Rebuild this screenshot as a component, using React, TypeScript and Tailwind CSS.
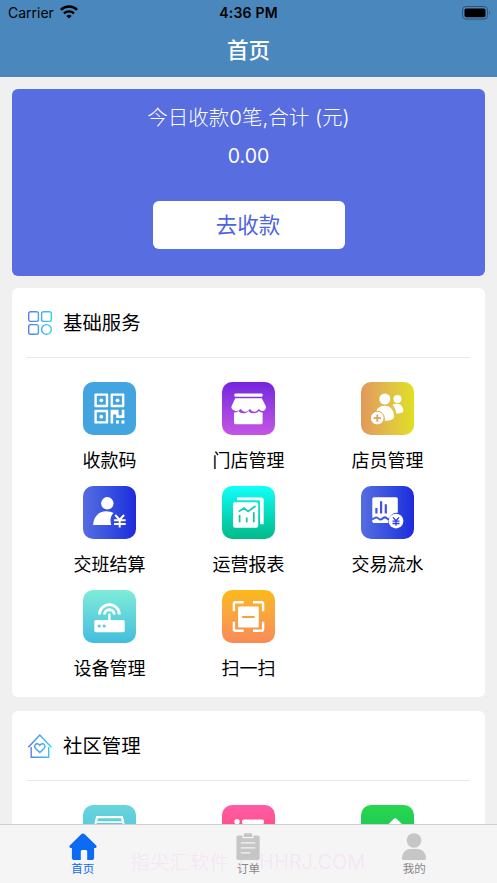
import React from 'react';

type Service = {
  label: string;
  tile: string;
  icon: React.ReactNode;
};

const QrIcon = () => (
  <svg viewBox="0 0 53 53" className="w-full h-full" fill="none">
    <g stroke="#fff" strokeWidth="2.4" strokeLinejoin="round">
      <rect x="12.6" y="12.6" width="11.4" height="11.4" />
      <rect x="28.8" y="12.6" width="11.4" height="11.4" />
      <rect x="12.6" y="29" width="11.4" height="11.4" />
    </g>
    <g fill="#fff">
      <circle cx="18.3" cy="18.3" r="1.9" />
      <circle cx="34.5" cy="18.3" r="1.9" />
      <circle cx="18.3" cy="34.7" r="1.9" />
      <path d="M27.6 27.8h8v5.4h3.2v-5.4h2.6v8.1h-8.2v-3.4h-3v9.1h-2.6z" />
      <rect x="33" y="38.4" width="2.9" height="3.2" />
      <rect x="38.5" y="38.4" width="2.9" height="3.2" />
    </g>
  </svg>
);

const StoreIcon = () => (
  <svg viewBox="0 0 53 53" className="w-full h-full" fill="#fff">
    <rect x="12.3" y="11.6" width="28.4" height="3.2" rx="1.4" />
    <path d="M13.2 16.2h26.6l4.2 8.3c.3 2.6-1.5 4.5-3.4 4.5-2 0-3.1-1-3.8-2.2-1.1 1.6-2.2 3-4.3 3-2.3 0-3.8-1.6-4.6-3-.8 1.4-2.3 3-4.6 3-2.1 0-3.6-1.4-4.5-3-.9 1.2-2 2.2-4 2.2-2.9 0-6.1-2-5.3-4.5z" />
    <path d="M12 30.4c2.2.3 3.5-.3 4.4-1.3 1.3 1.7 3.2 2.5 5.2 2.2 1.800 0 3.400-.8 4.800-2.400 1.500 1.600 3 2.400 5 2.400 2.200.1 4-.6 5.400-2.200 1.100 1.100 2.200 1.500 3.800 1.300v10c0 1-.7 1.800-1.800 1.800h-25c-1.100 0-1.800-.8-1.800-1.800z" />
  </svg>
);

const StaffIcon = () => (
  <svg viewBox="0 0 53 53" className="w-full h-full" fill="#fff">
    <circle cx="23.8" cy="17" r="5.5" />
    <circle cx="36.5" cy="17" r="4" />
    <path d="M31.600 22.900c1.400-.8 3.200-1.100 5-1.100 3.600 0 5.800 4 5.800 7.200 0 1.600-3.200 2.600-7.200 2.500-.3-3.500-1.600-6.500-3.600-8.600z" />
    <path d="M15.3 28.8c1.400-3.400 4.700-5 8.400-5 5.800 0 9.400 4.500 9.400 11 0 2.700-4.200 4-9.300 4-.1-4.900-3.300-9.300-8.500-10z" />
    <circle cx="16.3" cy="36.1" r="6.900" stroke="#e0a04e" strokeWidth="1" />
    <path d="M16.3 32.4v7.4M12.6 36.1H20" stroke="#dda351" strokeWidth="1.8" />
  </svg>
);

const ShiftIcon = () => (
  <svg viewBox="0 0 53 53" className="w-full h-full" fill="#fff">
    <circle cx="24.3" cy="17.3" r="6.2" />
    <path d="M10.1 38.9C10.6 30.4 16 25.2 23 25.2c3 0 5.6.7 7.5 1.9-3.1 3-3.6 7.7-2.2 11.8z" />
    <path d="M32.2 29l4.4 4.8 4.5-4.8M31 34.3h11.7M31 38h11.7M36.7 33.8v7.8" fill="none" stroke="#fff" strokeWidth="2" />
  </svg>
);

const ReportIcon = () => (
  <svg viewBox="0 0 53 53" className="w-full h-full">
    <path d="M15 14.2v-2.7h24.8c1 0 1.9.9 1.9 1.9v24.8H38V15.5c0-.8-.5-1.3-1.3-1.3z" fill="#fff" />
    <rect x="11" y="16.2" width="25.2" height="25.6" rx="2" fill="#fff" />
    <path d="M16.8 25.5l5.3-3.400 4 3.300 7.400-5.400" fill="none" stroke="#12cfb8" strokeWidth="1.7" />
    <path d="M17.6 29v7.200M24.7 31.500v4.700M31.8 26.2v10" stroke="#0ac5a2" strokeWidth="1.700" fill="none" />
  </svg>
);

const FlowIcon = () => (
  <svg viewBox="0 0 53 53" className="w-full h-full" fill="none">
    <path d="M11.3 13c0-1.1.7-1.8 1.8-1.8h22c1 0 1.7.7 1.7 1.8v13.700a9 9 0 0 0-8.800 5.600c-1.100.4-2.400-2-4-2-2.100 0-2.800 2.100-4.500 2.100s-2-2-4.200-2c-1.800 0-2.600 1.400-4 1.400z" fill="#fff" />
    <path d="M11.3 34.1c2 0 2.8-1.6 4-1.6 1.6 0 2.2 2 4.3 2s2.8-2 4.3-2 2 1.6 3.3 1.8c-.1 1 0 1.8.3 2.8H13c-1 0-1.7-.8-1.7-1.8z" fill="#fff" />
    <path d="M15.4 22v5.6M20.1 15.3v12.3M24.8 18.3v9.3" stroke="#4254dc" strokeWidth="2.2" />
    <circle cx="35" cy="35.1" r="7.4" fill="#fff" />
    <path d="M32 31.4l3 3.3 3-3.3M31.5 35.2h7M31.5 37.5h7M35 34.7v5" stroke="#2f3fdc" strokeWidth="1.3" />
  </svg>
);

const RouterIcon = () => (
  <svg viewBox="0 0 53 53" className="w-full h-full" fill="none">
    <path d="M16.400 24.600a10 10 0 1 1 20 0M21.500 24.600a4.900 4.900 0 1 1 9.800 0" stroke="#fff" strokeWidth="2.900" />
    <path d="M26.4 23.5v8" stroke="#fff" strokeWidth="2.4" />
    <rect x="11.3" y="30" width="30.4" height="12.2" rx="1.6" fill="#fff" />
    <circle cx="16.2" cy="36" r="1.6" fill="#5bcbd9" />
    <circle cx="21.2" cy="36" r="1.6" fill="#5bcbd9" />
  </svg>
);

const ScanIcon = () => (
  <svg viewBox="0 0 53 53" className="w-full h-full" fill="none">
    <path d="M11.9 21.300v-7.500c0-.9.6-1.500 1.500-1.500h8.300M31 12.300h8.600c.9 0 1.500.6 1.500 1.500v7.500M41.1 31.800v7.400c0 .9-.6 1.500-1.500 1.500H31M21.7 40.7h-8.300c-.9 0-1.500-.6-1.500-1.500v-7.400" stroke="#fff" strokeWidth="2.4" />
    <rect x="16" y="16.4" width="20.8" height="21" rx="1.2" fill="#fff" />
    <path d="M20.2 27h12.4" stroke="#f9a334" strokeWidth="2" />
  </svg>
);

const DeskIcon = () => (
  <svg viewBox="0 0 53 53" className="w-full h-full" fill="none">
    <path d="M14 12.2h25l2 9v17H12v-17z" stroke="#fff" strokeWidth="2.2" strokeLinejoin="round" />
    <path d="M14 17.2h25" stroke="#fff" strokeWidth="1.8" />
  </svg>
);

const ListIcon = () => (
  <svg viewBox="0 0 53 53" className="w-full h-full" fill="#fff">
    <circle cx="15" cy="16.8" r="2.7" />
    <rect x="20" y="14.6" width="22" height="4.4" rx="1.5" />
    <circle cx="15" cy="27" r="2.7" />
    <rect x="20" y="24.8" width="22" height="4.4" rx="1.5" />
  </svg>
);

const PenIcon = () => (
  <svg viewBox="0 0 53 53" className="w-full h-full" fill="#fff">
    <path d="M14 33L32.6 14.000c1-1 2.300-1 3.300 0l5.500 5.500L23 38.500l-10 2z" />
  </svg>
);

const basicServices: Service[] = [
  { label: '收款码', tile: 'bg-[#42a5df]', icon: <QrIcon /> },
  { label: '门店管理', tile: 'bg-linear-to-b from-[#7522dd] to-[#c654e3]', icon: <StoreIcon /> },
  { label: '店员管理', tile: 'bg-linear-to-r from-[#e1985a] to-[#dfe01c]', icon: <StaffIcon /> },
  { label: '交班结算', tile: 'bg-linear-to-r from-[#576ce1] to-[#1e28dc]', icon: <ShiftIcon /> },
  { label: '运营报表', tile: 'bg-linear-to-b from-[#14fffa] to-[#03ba89]', icon: <ReportIcon /> },
  { label: '交易流水', tile: 'bg-linear-to-r from-[#576ce1] to-[#1e28dc]', icon: <FlowIcon /> },
  { label: '设备管理', tile: 'bg-linear-to-b from-[#7eecda] to-[#42bddc]', icon: <RouterIcon /> },
  { label: '扫一扫', tile: 'bg-linear-to-b from-[#fbb915] to-[#f78b55]', icon: <ScanIcon /> },
];

const communityServices: Service[] = [
  { label: '', tile: 'bg-linear-to-b from-[#69d5dc] to-[#42bddc]', icon: <DeskIcon /> },
  { label: '', tile: 'bg-linear-to-b from-[#ff5ca7] to-[#ff3b5c]', icon: <ListIcon /> },
  { label: '', tile: 'bg-linear-to-b from-[#29d64d] to-[#10bd5c]', icon: <PenIcon /> },
];

const BlocksIcon = () => (
  <svg viewBox="0 0 24 24" className="w-6 h-6" fill="none" stroke="url(#blocks)" strokeWidth="1.4">
    <defs>
      <linearGradient id="blocks" gradientUnits="userSpaceOnUse" x1="0" y1="12" x2="24" y2="12">
        <stop stopColor="#5b78ee" />
        <stop offset="1" stopColor="#35d3ec" />
      </linearGradient>
    </defs>
    <rect x=".7" y=".7" width="9.7" height="9.7" rx="1.8" />
    <rect x="13.6" y=".7" width="9.7" height="9.7" rx="1.8" />
    <rect x=".7" y="13.6" width="9.7" height="9.7" rx="1.8" />
    <circle cx="18.45" cy="18.45" r="4.85" />
  </svg>
);

const HouseHeartIcon = () => (
  <svg viewBox="0 0 24 24" className="w-6 h-6" fill="none" stroke="url(#house)" strokeWidth="1.4">
    <defs>
      <linearGradient id="house" gradientUnits="userSpaceOnUse" x1="0" y1="12" x2="24" y2="12">
        <stop stopColor="#5b78ee" />
        <stop offset="1" stopColor="#35d3ec" />
      </linearGradient>
    </defs>
    <path d="M.4 13.2L11.8 1l11.6 12.2M3.2 13v10.2h17.5V13" />
    <path d="M11.8 18.6l-4.3-4.2c-2.2-2.4.2-5.3 2.6-4.4.8.3 1.3.8 1.7 1.4.4-.6.9-1.1 1.7-1.4 2.4-.9 4.8 2 2.6 4.4z" />
  </svg>
);

const HomeTabIcon = () => (
  <svg viewBox="0 0 28 28" className="w-7 h-7" fill="#0d6af2">
    <path d="M12.5 1c.9-.8 2.1-.8 3 0L27 12.2c1.2 1.2.6 2.9-1.1 2.9h-.8v9.3c0 1.7-1 2.7-2.7 2.7h-4.200v-8.500c0-1-.6-1.700-1.600-1.700h-3.200c-1 0-1.600.7-1.600 1.700v8.500H5.600c-1.700 0-2.700-1-2.700-2.700v-9.300h-.8C.4 15.100-.2 13.400 1 12.200z" />
  </svg>
);

const OrderTabIcon = () => (
  <svg viewBox="0 0 28 28" className="w-7 h-7" fill="#c6c6c6">
    <path d="M4.600 2.500h4v2.800h10.800v-2.800h4c1.500 0 2.300.8 2.300 2.300v20.100c0 1.400-.8 2.200-2.300 2.200H4.600c-1.400 0-2.200-.8-2.200-2.200V4.800c0-1.500.8-2.300 2.200-2.300z" />
    <rect x="9.800" y=".3" width="8.400" height="3.700" rx=".6" />
    <path d="M6.800 9.800h14.500M6.800 14.800h14.500M6.800 19.800h9.500" stroke="#f4f4f4" strokeWidth="1.300" />
  </svg>
);

const MineTabIcon = () => (
  <svg viewBox="0 0 28 28" className="w-7 h-7" fill="#c6c6c6">
    <circle cx="14" cy="7.500" r="7.300" />
    <path d="M2 25.300c0-5.500 3.600-9.400 8-9.400h8c4.400 0 8 3.900 8 9.400 0 1.100-.7 1.800-1.800 1.800H3.800c-1.100 0-1.800-.7-1.800-1.800z" />
  </svg>
);

const StatusBar: React.FC = () => (
  <div className="h-[25px] px-2 grid grid-cols-3 items-center text-black">
    <div className="flex items-center gap-[6px]">
      <span className="text-[14px]">Carrier</span>
      <svg viewBox="0 0 18 14" className="w-[18px] h-[14px] -mt-px" fill="none" stroke="#000">
        <path d="M.9 4.900a11.600 11.600 0 0 1 16.200 0" strokeWidth="2.500" />
        <path d="M4 8.300a7.200 7.200 0 0 1 10 0" strokeWidth="2.300" />
        <path d="M6.400 10.900a4 4 0 0 1 5.200 0L9 13.500z" fill="#000" stroke="none" />
      </svg>
    </div>
    <span className="text-center text-[14px] font-semibold tracking-[0.2px] whitespace-nowrap">4:36 PM</span>
    <svg viewBox="0 0 29 14" className="w-[29px] h-[14px] justify-self-end -mr-[2px]" fill="none">
      <rect x=".5" y=".5" width="25" height="12.600" rx="3.500" stroke="#2e5373" />
      <rect x="2.500" y="2.400" width="21" height="8.800" rx="1.700" fill="#000" />
      <path d="M27.300 5v3.800c1.200-.6 1.200-3.200 0-3.800z" fill="#2e5373" />
    </svg>
  </div>
);

const ServiceGrid: React.FC<{ items: Service[] }> = ({ items }) => (
  <div className="mx-auto w-[417px] pt-6 grid grid-cols-3 auto-rows-[104.300px]">
    {items.map((item, i) => (
      <div key={i} className="flex flex-col items-center">
        <div className={`w-[53px] h-[53px] rounded-[10px] overflow-hidden ${item.tile}`}>{item.icon}</div>
        <span className="mt-3 text-[18px] leading-7 whitespace-nowrap">{item.label}</span>
      </div>
    ))}
  </div>
);

const SectionTitle: React.FC<{ icon: React.ReactNode; title: string }> = ({ icon, title }) => (
  <div className="h-[69.500px] pl-px pt-px border-b border-[#e8e8e8] flex items-center gap-[11px]">
    {icon}
    <h2 className="text-[19.400px] leading-7">{title}</h2>
  </div>
);

const App: React.FC = () => {
  return (
    <div className="relative w-full h-[883px] overflow-hidden flex flex-col bg-[#f0f0f0] text-black font-['Inter','Noto_Sans_CJK_SC',sans-serif]">
      {/* Header */}
      <header className="h-[77px] shrink-0 bg-[#4a87bd]">
        <StatusBar />
        <h1 className="h-[51px] flex items-center justify-center text-[21.500px] font-medium text-white">首页</h1>
      </header>

      <main className="h-[747px] shrink-0 overflow-hidden px-3 pt-3">
        {/* Today's takings */}
        <section className="h-[187px] rounded-md bg-[#576de0] text-white flex flex-col items-center">
          <p className="mt-[14px] text-[20.500px] leading-[30px] font-light whitespace-nowrap">今日收款0笔,合计 (元)</p>
          <p className="mt-[8px] text-[19.500px] leading-[30px]">0.00</p>
          <button className="mt-[29.500px] pt-px pr-px w-[192px] h-12 rounded-md bg-white text-[#4f65de] text-[21.500px]">去收款</button>
        </section>

        <section className="mt-3 h-[409px] rounded-md bg-white px-[15px]">
          <SectionTitle icon={<BlocksIcon />} title="基础服务" />
          <ServiceGrid items={basicServices} />
        </section>

        <section className="mt-[14px] h-[409px] rounded-md bg-white px-[15px]">
          <SectionTitle icon={<HouseHeartIcon />} title="社区管理" />
          <ServiceGrid items={communityServices} />
        </section>
      </main>

      {/* Tab bar */}
      <nav className="relative h-[59px] shrink-0 border-t border-[#cfcfcf] bg-[#f5f5f5] grid grid-cols-3 text-[11.500px] leading-4 text-[#888]">
        <span className="absolute left-[130px] top-[23px] text-[19.500px] leading-7 tracking-[0.400px] font-light text-[#f7e4f5] whitespace-nowrap">指尖汇软件 ZJHHRJ.COM</span>
        <div className="relative flex flex-col items-center pt-2 text-[#0d6af2]">
          <HomeTabIcon />
          <span>首页</span>
        </div>
        <div className="relative flex flex-col items-center pt-2">
          <OrderTabIcon />
          <span>订单</span>
        </div>
        <div className="relative flex flex-col items-center pt-2">
          <MineTabIcon />
          <span>我的</span>
        </div>
      </nav>
    </div>
  );
};

export default App;
